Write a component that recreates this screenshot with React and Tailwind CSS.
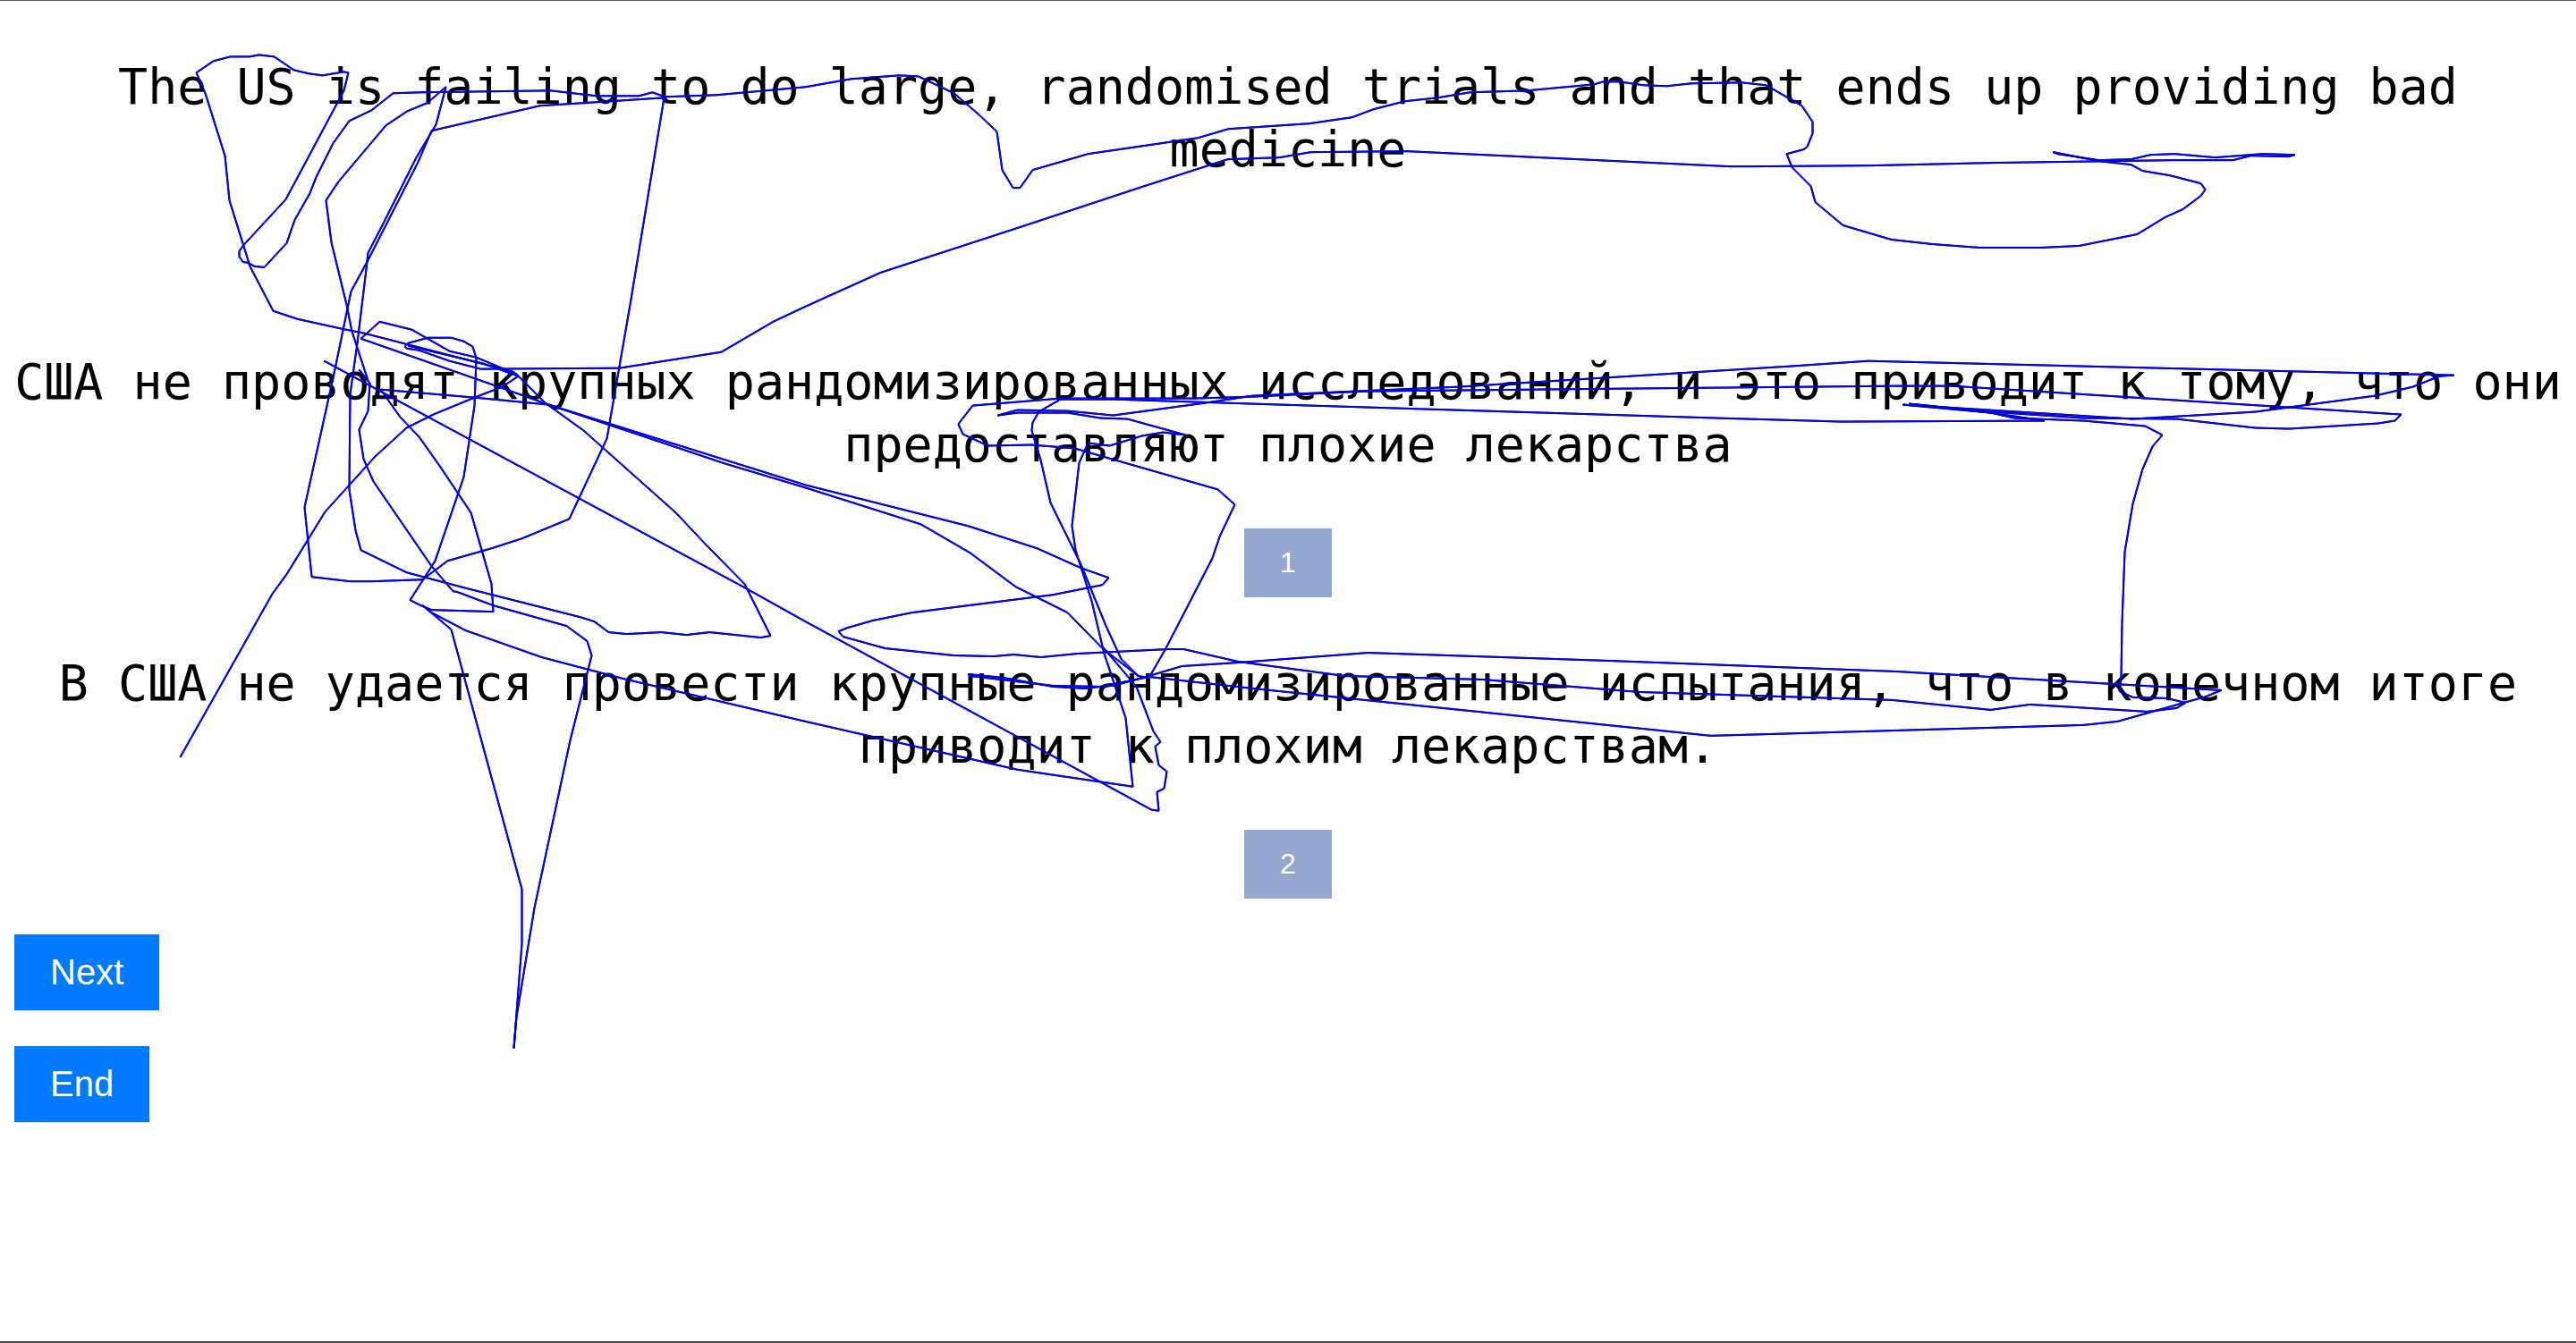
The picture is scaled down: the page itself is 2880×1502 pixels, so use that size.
const GAZE_PATHS = [
  "219,80 238,67 257,62 279,62 289,60 306,62 328,77 345,81 360,83 384,79 389,80 384,100 319,222 272,273 267,280 267,286 271,292 277,293 284,297 295,298 320,271 329,245 346,215 353,197 372,159 390,134 415,122 439,103 470,102 615,100 666,106 714,106 729,102 743,107 800,105 900,96 951,87 1005,83 1026,84 1066,103 1094,127 1114,146 1120,189 1132,209 1140,209 1154,189 1216,171 1339,153 1373,143 1463,137 1511,130 1535,121 1570,112 1607,108 1643,102 1707,100 1782,93 1792,90 1810,90 1837,94 1863,95 1890,92 1947,91 1974,94 2014,117 2026,135 2026,148 2020,163 2016,166 1997,171 2003,186 2024,207 2029,225 2060,251 2114,267 2159,272 2212,276 2282,276 2324,274 2389,261 2420,242 2440,233 2460,218 2465,211 2460,204 2425,195 2395,190 2382,183 2346,179 2295,169 2300,171 2346,178 2382,177 2404,172 2431,171 2476,175 2529,171 2565,172 2558,174 2516,173 2496,178 2429,178 2226,181 2092,184 1958,185 1933,185 1573,168 1465,169 1430,175 1372,177 1276,208 1137,254 984,304 900,342 864,359 806,393 692,411 537,412 502,403 468,391 454,389 452,387 456,383 478,377 504,377 518,381 528,387 532,400 530,453 518,533 486,627 458,671 470,677 482,682 551,684 549,653 526,573 492,522 468,488 447,466 425,435 530,444 613,452 900,542 1082,588 1159,613 1208,635 1239,646 1232,654 1177,665 1019,685 975,694 947,702 937,706 942,712 989,725 1066,733 1110,734 1133,732 1163,735 1204,731 1305,726 1323,726 1384,740 1503,756 1657,760 1832,774 2115,783 2225,794 2269,788 2400,796 2433,792 2443,786 2422,781 2384,780 2369,773 2371,757 2372,697 2375,617 2384,563 2395,524 2406,499 2417,486 2398,476 2329,470 2252,467 2225,461 2127,452 2384,468 2521,460 2655,442 2697,432 2727,420 2743,419 2658,417 2088,403 2000,409 1630,432 1400,442 1347,450 1244,464 1193,459 1137,458 1115,464",
  "1115,464 1137,461 1193,461 1230,467 1260,468 1325,486 1300,483 1276,487 1240,498 1216,495 1206,517 1198,588 1202,615 1220,672 1234,731 1258,803 1266,880 1137,861 900,807 696,759 605,735 520,705 482,685 472,677 504,704 583,995 583,1056 574,1173 577,1138 597,1016 637,828 661,733 656,717 633,700 551,677 511,662 506,661 482,633 417,538 406,513 401,480 411,459 413,428 401,413 411,425 393,370 387,340 370,270 364,223 378,202 431,139 455,123 477,114 498,96 487,138 465,175 429,247 411,282 409,300 399,383 391,440 390,547 397,593 403,615 454,640 518,657 648,690 664,695 680,707 700,709 739,707 767,710 793,707 850,713 861,711 832,653 787,607 755,573 652,481 609,450 577,418 532,399 502,392 460,368 440,363 424,359 403,378 557,432 613,452 810,518 900,545 1029,586 1084,618 1135,656 1193,685 1232,725 1272,756 1284,758 1303,725 1355,624 1363,600 1380,564 1361,547 1201,501 1153,497 1104,498 1076,485 1071,474 1073,471 1087,453 1185,445 1335,445 1400,443 1524,437 1813,434 2120,431 2181,431 2684,463 2677,470 2658,473 2559,479 2521,478 2433,468 2329,467 2225,460 2134,451 2225,461 2285,470 2058,471 1919,467 1400,451 1244,446 1185,446 1161,460 1154,472 1153,481 1163,514 1174,562 1208,631 1236,700 1253,737 1272,756",
  "1082,754 1121,758 1177,768 1212,770 1248,766 1284,756 1321,745 1384,741 1529,730 1799,739 2120,751 2483,772 2466,779 2367,807 2329,811 2019,820 1912,823 1400,770 1284,757 1230,768 1177,767 1084,756",
  "1232,723 1270,768 1289,818 1297,830 1291,835 1295,856 1304,863 1303,870 1301,882 1293,886 1295,907 1287,906 900,695 832,657 362,403",
  "482,145 467,180 411,290 392,325 373,417 340,567 348,645 391,650 415,650 472,648 500,627 549,613 583,602 636,580 678,490 704,340 742,108 666,113 603,117 482,145",
  "219,80 229,103 251,173 256,223 279,297 305,347 332,356 382,367 407,372 573,415 579,420 561,432 530,444 484,463 454,478 419,510 363,572 320,642 304,664 201,847",
  "456,386 540,406 579,420",
];

// Square 2x2 pen: diagonal runs come out heavier than level ones.
const PEN = ["translate(0 0)", "translate(1 0)", "translate(0 1)", "translate(1 1)"];

function GazeOverlay() {
  return (
    <svg
      className="pointer-events-none absolute inset-0 h-full w-full"
      viewBox="0 0 2880 1502"
      preserveAspectRatio="none"
      fill="none"
      stroke="#0000dc"
      strokeWidth="1"
      strokeLinejoin="round"
      shapeRendering="crispEdges"
      aria-hidden="true"
    >
      {PEN.map((offset) => (
        <g key={offset} transform={offset}>
          {GAZE_PATHS.map((points) => (
            <polyline key={points} points={points} />
          ))}
        </g>
      ))}
    </svg>
  );
}

function Choice({ text, label }) {
  return (
    <section className="flex flex-col items-center gap-[59px]">
      <p>{text}</p>
      <button
        type="button"
        className="bg-[#94a7d0] px-10 py-5 font-['Liberation_Sans',Arial,sans-serif] text-[32px] leading-[37px] text-white"
      >
        {label}
      </button>
    </section>
  );
}

function Action({ children }) {
  return (
    <button
      type="button"
      className="bg-[#007bff] px-10 py-5 font-['Liberation_Sans',Arial,sans-serif] text-[40px] leading-[45px] text-white"
    >
      {children}
    </button>
  );
}

export default function App() {
  return (
    <main className="relative min-h-screen border-t border-b-2 border-t-[#5a5a5a] border-b-[#444444] bg-[#fefefe] px-4 pt-[61px] font-['DejaVu_Sans_Mono',monospace] text-[55px] leading-[70px] text-black">
      <div className="flex flex-col text-center">
        <p className="mb-[190px]">
          The US is failing to do large, randomised trials and that ends up providing bad medicine
        </p>
        <div className="flex flex-col gap-[61px]">
          <Choice
            text="США не проводят крупных рандомизированных исследований, и это приводит к тому, что они предоставляют плохие лекарства"
            label="1"
          />
          <Choice
            text="В США не удается провести крупные рандомизированные испытания, что в конечном итоге приводит к плохим лекарствам."
            label="2"
          />
        </div>
      </div>
      <div className="mt-10 flex flex-col items-start gap-10">
        <Action>Next</Action>
        <Action>End</Action>
      </div>
      <GazeOverlay />
    </main>
  );
}
